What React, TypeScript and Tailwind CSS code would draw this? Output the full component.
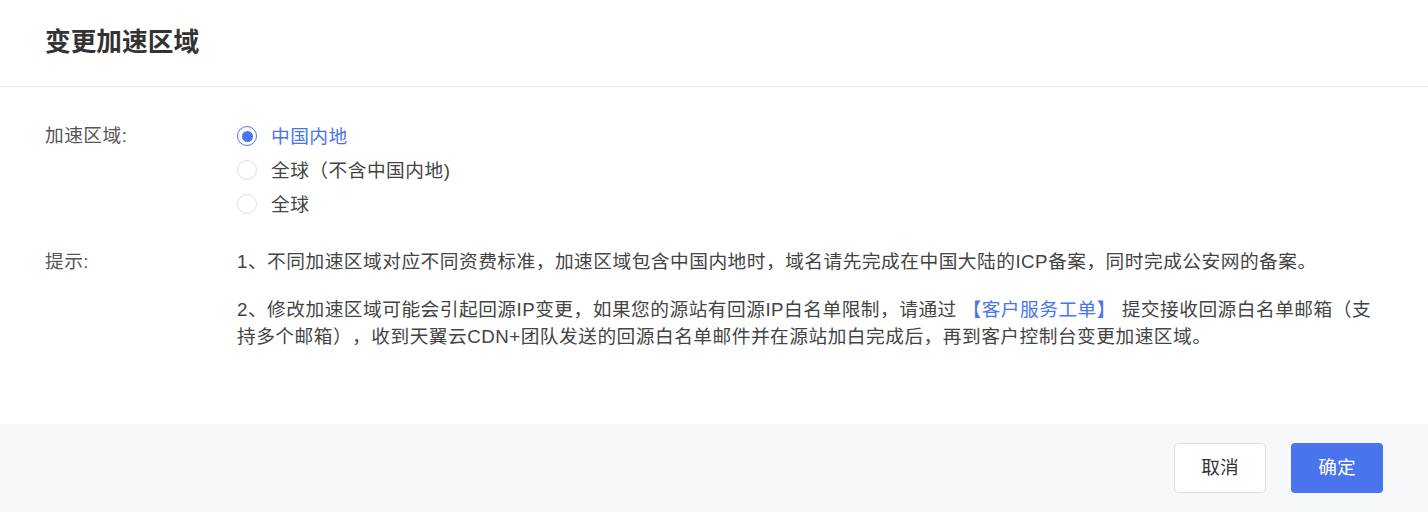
import React from "react";

const FONT = "font-['Liberation_Sans','Noto_Sans_CJK_SC',sans-serif]";

function Radio({ checked, label }: { checked?: boolean; label: string }) {
  return (
    <label className="flex items-center h-[34px] cursor-pointer">
      <span
        className={
          checked
            ? "w-[20px] h-[20px] rounded-full border-[1.5px] border-[#4a74ee] flex items-center justify-center bg-white"
            : "w-[20px] h-[20px] rounded-full border border-[#dcdfe6] bg-white"
        }
      >
        {checked && <span className="w-[11px] h-[11px] rounded-full bg-[#4a74ee]" />}
      </span>
      <span
        className={
          "ml-[14px] text-[18.7px] leading-[27px] tracking-[0.5px] [text-spacing-trim:space-all] " +
          (checked ? "text-[#4a74ee]" : "text-[#444]")
        }
      >
        {label}
      </span>
    </label>
  );
}

export default function App() {
  return (
    <div className={"w-[1428px] h-[512px] bg-white flex flex-col " + FONT}>
      <div className="h-[87px] shrink-0 border-b border-[#e5e6eb] flex items-center px-[45px]">
        <h2 className="text-[25.7px] font-bold text-[#333] leading-none">变更加速区域</h2>
      </div>
      <div className="flex-1 px-[45px] pt-[32px] tracking-[0.5px] [text-spacing-trim:space-all]">
        <div className="flex">
          <div className="w-[192px] shrink-0 h-[34px] flex items-center text-[18.7px] text-[#555]">加速区域:</div>
          <div className="flex flex-col">
            <Radio checked label="中国内地" />
            <Radio label="全球（不含中国内地)" />
            <Radio label="全球" />
          </div>
        </div>
        <div className="flex mt-[27px] text-[18.7px] leading-[27px]">
          <div className="w-[192px] shrink-0 text-[#555]">提示:</div>
          <div className="flex-1 text-[#444]">
            <p>1、不同加速区域对应不同资费标准，加速区域包含中国内地时，域名请先完成在中国大陆的ICP备案，同时完成公安网的备案。</p>
            <p className="mt-[21px]">
              2、修改加速区域可能会引起回源IP变更，如果您的源站有回源IP白名单限制，请通过
              <span className="text-[#4a74ee]"> 【客户服务工单】 </span>
              提交接收回源白名单邮箱（支持多个邮箱），收到天翼云CDN+团队发送的回源白名单邮件并在源站加白完成后，再到客户控制台变更加速区域。
            </p>
          </div>
        </div>
      </div>
      <div className="h-[88px] shrink-0 bg-[#f7f8fa] flex items-center justify-end gap-[25px] px-[45px]">
        <button className="w-[92px] h-[50px] rounded-[4px] border border-[#dcdfe6] bg-white text-[18.7px] text-[#333]">
          取消
        </button>
        <button className="w-[92px] h-[50px] rounded-[4px] bg-[#4a74ee] text-[18.7px] text-white">
          确定
        </button>
      </div>
    </div>
  );
}
